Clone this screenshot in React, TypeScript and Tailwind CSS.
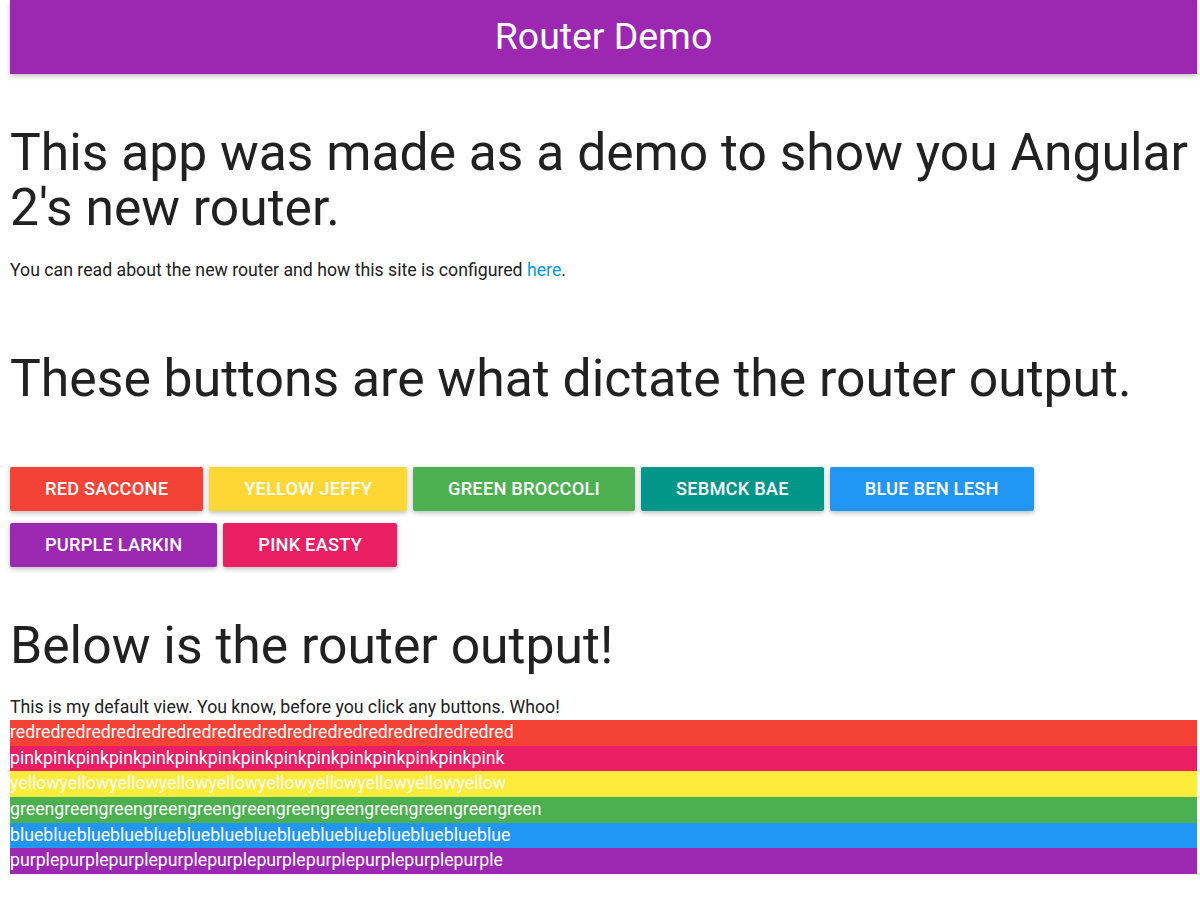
import React from "react";

const buttons = [
  { label: "Red Saccone", cls: "bg-[#f44336]" },
  { label: "Yellow Jeffy", cls: "bg-[#fdd835]" },
  { label: "Green Broccoli", cls: "bg-[#4caf50]" },
  { label: "Sebmck Bae", cls: "bg-[#009688]" },
  { label: "Blue Ben Lesh", cls: "bg-[#2196f3]" },
  { label: "Purple Larkin", cls: "bg-[#9c27b0]" },
  { label: "Pink Easty", cls: "bg-[#e91e63]" },
];

const bands = [
  { word: "red", n: 20, cls: "bg-[#f44336]" },
  { word: "pink", n: 15, cls: "bg-[#e91e63]" },
  { word: "yellow", n: 10, cls: "bg-[#ffeb3b]" },
  { word: "green", n: 12, cls: "bg-[#4caf50]" },
  { word: "blue", n: 15, cls: "bg-[#2196f3]" },
  { word: "purple", n: 10, cls: "bg-[#9c27b0]" },
];

export default function App() {
  return (
    <div className="min-h-[898px] bg-white pl-[10px] pr-[3px] text-[#212121] [font-family:Roboto,'Noto_Sans',sans-serif]">
      <header className="flex h-[74px] items-center justify-center bg-[#9c27b0] shadow-[0_2px_5px_rgba(0,0,0,0.26)]">
        <span className="text-[37.4px] leading-none text-white">Router Demo</span>
      </header>

      <h1 className="mt-[51px] text-[51.6px] leading-[55px] font-normal">
        This app was made as a demo to show you Angular 2's new router.
      </h1>
      <p className="mt-[24px] text-[17.7px] leading-[22px]">
        You can read about the new router and how this site is configured{" "}
        <a className="text-[#039be5]" href="#">here</a>.
      </p>

      <h2 className="mt-[70px] text-[51.7px] leading-[55px] font-normal">
        These buttons are what dictate the router output.
      </h2>

      <div className="mt-[61px] flex max-w-[1060px] flex-wrap gap-x-[6px] gap-y-[12px]">
        {buttons.map((b) => (
          <button
            key={b.label}
            className={`h-[44px] rounded-[2px] px-[35px] text-[18.3px] font-medium uppercase tracking-[0.01em] text-white shadow-[0_2px_5px_rgba(0,0,0,0.26)] ${b.cls}`}
          >
            {b.label}
          </button>
        ))}
      </div>

      <h3 className="mt-[51px] text-[51.7px] leading-[55px] font-normal">
        Below is the router output!
      </h3>

      <p className="mt-[22px] text-[17.7px] leading-[25px]">
        This is my default view. You know, before you click any buttons. Whoo!
      </p>
      <div className="flex flex-col">
        {bands.map((b) => (
          <div key={b.word} className={`h-[25.7px] text-[17.7px] leading-[25.7px] text-white ${b.cls}`}>
            {b.word.repeat(b.n)}
          </div>
        ))}
      </div>
    </div>
  );
}
